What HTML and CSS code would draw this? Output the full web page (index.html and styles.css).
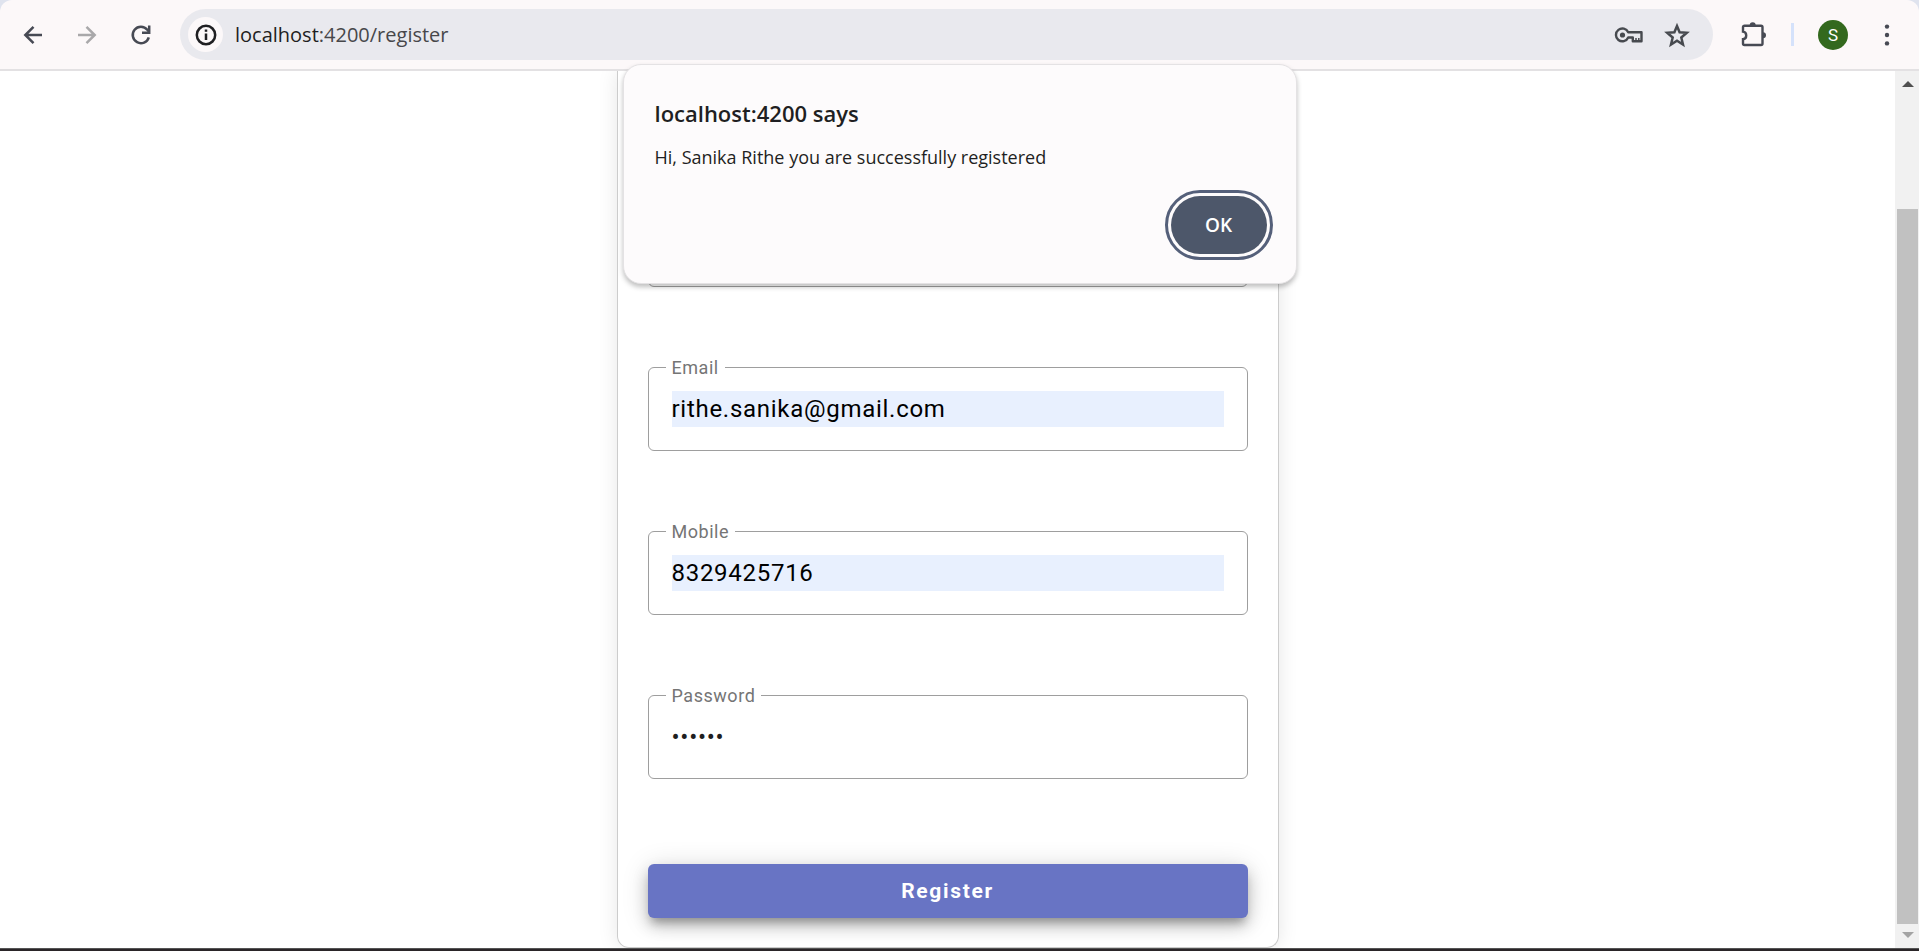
FILE: index.html
```html
<!DOCTYPE html>
<html lang="en">
<head>
<meta charset="utf-8">
<title>Register</title>
<link rel="stylesheet" href="styles.css">
</head>
<body>
<header class="toolbar">
  <nav class="nav" aria-label="Browser navigation">
    <button class="icon-btn" type="button" aria-label="Back">
      <svg width="24" height="24" viewBox="0 0 24 24" fill="none" stroke="#474a54" stroke-width="2.500"><path d="M21 12H4.500M12.500 3.800L4.300 12l8.200 8.200"/></svg>
    </button>
    <button class="icon-btn" type="button" aria-label="Forward" disabled>
      <svg width="24" height="24" viewBox="0 0 24 24" fill="none" stroke="#a9a8aa" stroke-width="2.500"><path d="M3 12h16.500M11.500 3.800L19.700 12l-8.200 8.200"/></svg>
    </button>
    <button class="icon-btn" type="button" aria-label="Reload">
      <svg width="24" height="24" viewBox="0 0 24 24" fill="none" stroke="#474a54" stroke-width="2.500"><path d="M19.800 14.300A8.200 8.200 0 1 1 18.300 6.800L20 8.700"/><path d="M20.200 2.500v7.200h-7.200"/></svg>
    </button>
  </nav>
  <div class="address">
    <button class="site-info" type="button" aria-label="View site information">
      <svg width="24" height="24" viewBox="0 0 24 24" fill="none" stroke="#1f1f22" stroke-width="2.500"><circle cx="12" cy="12" r="9.200"/><path d="M12 10.500v6.500"/><path d="M12 6.500v2.300"/></svg>
    </button>
    <span class="url"><span class="host">localhost</span>:4200/register</span>
    <button class="icon-btn" type="button" aria-label="Passwords">
      <svg width="30" height="24" viewBox="0 0 30 24" fill="none" stroke="#474a4f" stroke-width="2.400"><path d="M14.200 9.300A6.400 6.400 0 1 0 14.200 14.500H18.800V18.200H27.500V9.300Z" stroke-linejoin="round"/><path d="M22 18v-3M24.800 18v-3" stroke-width="1.500"/><circle cx="8.500" cy="12" r="2.600" fill="#474a4f" stroke="none"/></svg>
    </button>
    <button class="icon-btn" type="button" aria-label="Bookmark this tab">
      <svg width="26" height="26" viewBox="0 0 26 26" fill="none" stroke="#474a4f" stroke-width="2.500"><path d="M13 4l2.600 6.200 7.200.6-5.500 4.700 1.700 7-6-3.700-6 3.700 1.700-7-5.500-4.700 7.200-.6z"/></svg>
    </button>
  </div>
  <div class="actions">
    <button class="icon-btn" type="button" aria-label="Extensions">
      <svg width="28" height="28" viewBox="0 0 28 28"><path d="M5.500 4.700H22a1.500 1.500 0 0 1 1.500 1.500V22.500a1.500 1.500 0 0 1-1.500 1.500H5.500A1.500 1.500 0 0 1 4 22.500V18.200C8.300 17.800 8.300 11 4 10.600V6.200a1.500 1.500 0 0 1 1.500-1.500z" fill="none" stroke="#474a54" stroke-width="2.400"/><path d="M10.700 4.200a3 3 0 0 1 6 0zM24 11.200a3 3 0 0 1 0 6z" fill="#474a54"/></svg>
    </button>
    <span class="divider"></span>
    <button class="avatar" type="button" aria-label="Profile S">S</button>
    <button class="icon-btn" type="button" aria-label="Menu">
      <svg width="24" height="24" viewBox="0 0 24 24" fill="#474a54"><circle cx="12" cy="3.600" r="2.200"/><circle cx="12" cy="12" r="2.200"/><circle cx="12" cy="20.400" r="2.200"/></svg>
    </button>
  </div>
</header>

<div class="viewport">
  <main class="page">
    <form class="card">
      <div class="field"><input class="field-input" type="text" aria-label="Name"></div>
      <div class="field">
        <label class="field-label" for="email">Email</label>
        <input class="field-input autofilled" id="email" type="email" value="rithe.sanika@gmail.com">
      </div>
      <div class="field">
        <label class="field-label" for="mobile">Mobile</label>
        <input class="field-input autofilled" id="mobile" type="tel" value="8329425716">
      </div>
      <div class="field">
        <label class="field-label" for="password">Password</label>
        <input class="field-input" id="password" type="password" value="123456">
      </div>
      <button class="register" type="button">Register</button>
    </form>
  </main>
  <div class="scrollbar">
    <svg width="12" height="6" viewBox="0 0 12 6" fill="#505050"><path d="M0 6L6 0l6 6z"/></svg>
    <div class="track"><div class="thumb"></div></div>
    <svg width="12" height="6" viewBox="0 0 12 6" fill="#a3a3a3"><path d="M0 0l6 6 6-6z"/></svg>
  </div>
</div>
<div class="taskbar-edge"></div>

<section class="dialog" role="alertdialog" aria-labelledby="dialog-title" aria-describedby="dialog-text">
  <h1 class="dialog-title" id="dialog-title">localhost:4200 says</h1>
  <p class="dialog-text" id="dialog-text">Hi, Sanika Rithe you are successfully registered</p>
  <button class="ok" type="button">OK</button>
</section>
</body>
</html>
```
FILE: styles.css
```css
* { box-sizing: border-box; }

body {
  margin: 0;
  height: 100vh;
  display: flex;
  flex-direction: column;
  overflow: hidden;
  background: #dfe3ee;
  font-family: Roboto, "Liberation Sans", sans-serif;
}

button {
  border: 0;
  padding: 0;
  background: none;
  font: inherit;
}

svg { display: block; }

/* Browser toolbar */
.toolbar {
  display: flex;
  align-items: center;
  padding: 9px 20px 9px 21px;
  background: #fcf8f9;
  border-bottom: 2px solid #e3e1e3;
  border-radius: 12px 12px 0 0;
}

.nav { display: flex; gap: 30px; margin-right: 27px; }

.address {
  flex: 1;
  display: flex;
  align-items: center;
  gap: 20px;
  height: 51px;
  padding: 0 23px 0 8px;
  background: #e9e9ee;
  border-radius: 26px;
}

.site-info {
  display: grid;
  place-items: center;
  width: 35px;
  height: 35px;
  border-radius: 50%;
  background: #fcf8f9;
}

.url {
  flex: 1;
  margin-left: -8px;
  font-family: "Segoe UI", "Open Sans", sans-serif;
  font-size: 20px;
  color: #47474a;
}

.host { color: #1f1f22; }

.actions { display: flex; align-items: center; gap: 24px; margin-left: 26px; }

.divider { width: 3px; height: 23px; background: #d5e2fb; }

.avatar {
  width: 30px;
  height: 30px;
  border-radius: 50%;
  background: #33691e;
  color: #fff;
  font-size: 17px;
}

.avatar + .icon-btn { margin-left: 3px; }

/* Page area */
.viewport { flex: 1; min-height: 0; display: flex; background: #fff; }

.page {
  flex: 1;
  display: flex;
  justify-content: center;
  overflow: hidden;
}

.card {
  width: 662px;
  display: flex;
  flex-direction: column;
  justify-content: flex-end;
  gap: 80px;
  padding: 0 30px 29px;
  border: 1px solid #ccc;
  border-top: 0;
  border-radius: 0 0 12px 12px;
  box-shadow: 0 0 20px rgba(0, 0, 0, 0.1);
}

.field {
  position: relative;
  padding: 23px;
  border: 1px solid #9e9e9e;
  border-radius: 6px;
  background: #fff;
}

.field-label {
  position: absolute;
  top: -11px;
  left: 17px;
  padding: 0 6px;
  background: #fff;
  color: #757575;
  font-size: 18px;
  line-height: 22px;
  letter-spacing: 0.03em;
}

.field-input {
  display: block;
  width: 100%;
  height: 36px;
  padding: 0;
  border: 0;
  outline: 0;
  background: transparent;
  color: #1f1f1f;
  font: 24px Roboto, "Liberation Sans", sans-serif;
  letter-spacing: 0.03em;
}

.autofilled { background: #e8f0fe; color: #000; }

.register {
  height: 54px;
  margin-top: 5px;
  border-radius: 6px;
  background: #6874c4;
  color: #fff;
  font-size: 21px;
  font-weight: 700;
  letter-spacing: 0.08em;
  box-shadow: 0 8px 8px -4px rgba(0, 0, 0, 0.25), 0 8px 16px rgba(0, 0, 0, 0.2), 0 3px 28px rgba(0, 0, 0, 0.14);
}

.scrollbar {
  width: 24px;
  display: flex;
  flex-direction: column;
  align-items: center;
  padding: 10px 1px 10px 2px;
  background: #f1f1f1;
}

.track {
  flex: 1;
  align-self: stretch;
  display: flex;
  flex-direction: column;
  justify-content: flex-end;
  padding-bottom: 8px;
}

.thumb { height: 85.4%; background: #c1c1c1; }

.taskbar-edge { height: 3px; background: #2a2528; border-top: 1px solid #555; }

/* Alert dialog */
.dialog {
  position: absolute;
  top: 64px;
  left: 50%;
  transform: translateX(-50%);
  width: 674px;
  display: flex;
  flex-direction: column;
  padding: 31px 29px 29px 31px;
  background: #fdfbfc;
  border: 1px solid #e4e2e4;
  border-radius: 18px;
  box-shadow: 0 3px 5px rgba(0, 0, 0, 0.25);
  font-family: "Segoe UI", "Open Sans", sans-serif;
  color: #1f1f22;
}

.dialog-title { margin: 0; font-size: 22px; font-weight: 600; line-height: 34px; }

.dialog-text { margin: 15px 0 27px; font-size: 18px; line-height: 24px; }

.ok {
  align-self: flex-end;
  width: 96px;
  height: 58px;
  border-radius: 29px;
  background: #4d576a;
  color: #fff;
  font-size: 19px;
  font-weight: 600;
  outline: 3px solid #55607a;
  outline-offset: 3px;
}
```
